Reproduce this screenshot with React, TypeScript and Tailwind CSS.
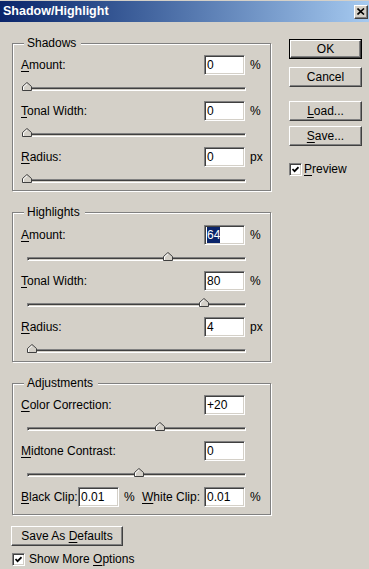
import type { ReactNode } from "react";

const sunken =
  "border border-t-[#808080] border-l-[#808080] border-b-white border-r-white shadow-[inset_1px_1px_0_#404040,inset_-1px_-1px_0_#d4d0c8]";

function U({ children }: { children: string }) {
  return <span className="underline underline-offset-[2px]">{children}</span>;
}

function Field({ value, selected }: { value: string; selected?: boolean }) {
  return (
    <div className={`flex h-[20px] w-[41px] items-center bg-white pl-[2px] leading-none ${sunken}`}>
      {selected ? <span className="bg-[#0a246a] py-[2px] text-white">{value}</span> : value}
    </div>
  );
}

function Thumb() {
  return (
    <svg width="10" height="9" viewBox="0 0 10 9">
      <polygon points="0.5,4.5 5,0.5 9.5,4.5 9.5,8.5 0.5,8.5" fill="#d4d0c8" stroke="#404040" />
      <polyline points="1.5,8 1.5,4.9 5,1.8" fill="none" stroke="#fff" />
    </svg>
  );
}

function Track({ start, thumb }: { start: string; thumb: string }) {
  return (
    <div
      className={`relative mt-[12px] mr-[24px] h-[4px] border border-t-[#808080] border-l-[#808080] border-b-white border-r-white bg-[#d4d0c8] shadow-[inset_1px_1px_0_#404040] ${start}`}
    >
      <div className={`absolute -top-[6px] flex ${thumb}`}>
        <Thumb />
      </div>
    </div>
  );
}

function SliderRow({
  label,
  value,
  unit,
  start,
  thumb,
  selected,
}: {
  label: ReactNode;
  value: string;
  unit: string;
  start: string;
  thumb: string;
  selected?: boolean;
}) {
  return (
    <div className="flex flex-col">
      <div className="flex h-[20px] items-center pl-[8px]">
        <div className="flex-1">{label}</div>
        <Field value={value} selected={selected} />
        <div className="w-[25px] pl-[5px]">{unit}</div>
      </div>
      <Track start={start} thumb={thumb} />
    </div>
  );
}

function Group({ title, className, children }: { title: string; className: string; children: ReactNode }) {
  return (
    <div
      className={`relative w-[259px] border border-[#808080] shadow-[1px_1px_0_#fff,inset_1px_1px_0_#fff] ${className}`}
    >
      <span className="absolute left-[11px] -top-[8px] bg-[#d4d0c8] pl-[3px] pr-[5px] leading-[14px]">{title}</span>
      {children}
    </div>
  );
}

function Btn({ children, def, className = "" }: { children: ReactNode; def?: boolean; className?: string }) {
  const inner = (
    <div className="flex h-full w-full items-center justify-center border border-t-white border-l-white border-r-[#404040] border-b-[#404040] shadow-[inset_-1px_-1px_0_#808080]">
      {children}
    </div>
  );
  return <div className={`${def ? "border border-black" : ""} ${className}`}>{inner}</div>;
}

function Check() {
  return (
    <div className={`flex h-[13px] w-[13px] items-center justify-center bg-white ${sunken}`}>
      <svg width="7" height="7" viewBox="0 0 7 7">
        <polyline points="0.5,3 2.6,5.2 6.5,1.2" fill="none" stroke="#000" strokeWidth="1.7" />
      </svg>
    </div>
  );
}

export default function App() {
  return (
    <div className="h-[569px] w-[369px] overflow-hidden bg-[#d4d0c8] pt-[1px] font-['Liberation_Sans',Arial,sans-serif] text-[12px] text-black">
      {/* Title bar */}
      <div className="flex h-[21px] items-center justify-between bg-linear-to-r from-[#0a246a] to-[#a6caf0] pl-[3px] pr-[1px]">
        <span className="text-[12.5px] font-bold text-white">Shadow/Highlight</span>
        <div className="flex h-[14px] w-[14px] items-center justify-center border border-t-white border-l-white border-r-[#404040] border-b-[#404040] bg-[#d4d0c8] shadow-[inset_-1px_-1px_0_#808080]">
          <svg width="8" height="7" viewBox="0 0 8 7">
            <path d="M0.5 0.5 L7 6.5 M7 0.5 L0.5 6.5" stroke="#000" strokeWidth="1.6" />
          </svg>
        </div>
      </div>

      <div className="flex">
        {/* Left column */}
        <div className="w-[271px] pl-[12px]">
          <Group title="Shadows" className="mt-[21px] flex flex-col gap-[10px] pt-[11px] pb-[7px]">
            <SliderRow label={<><U>A</U>mount:</>} value="0" unit="%" start="ml-[9px]" thumb="-left-[1px]" />
            <SliderRow label={<><U>T</U>onal Width:</>} value="0" unit="%" start="ml-[9px]" thumb="-left-[1px]" />
            <SliderRow label={<><U>R</U>adius:</>} value="0" unit="px" start="ml-[9px]" thumb="-left-[1px]" />
          </Group>

          <Group title="Highlights" className="mt-[21px] flex flex-col gap-[10px] pt-[12px] pb-[8px]">
            <SliderRow label={<><U>A</U>mount:</>} value="64" unit="%" start="ml-[14px]" thumb="left-[135px]" selected />
            <SliderRow label={<><U>T</U>onal Width:</>} value="80" unit="%" start="ml-[14px]" thumb="left-[171px]" />
            <SliderRow label={<><U>R</U>adius:</>} value="4" unit="px" start="ml-[14px]" thumb="-left-[1px]" />
          </Group>

          <Group title="Adjustments" className="mt-[21px] flex flex-col gap-[10px] pt-[11px] pb-[7px]">
            <SliderRow label={<><U>C</U>olor Correction:</>} value="+20" unit="" start="ml-[14px]" thumb="left-[127px]" />
            <SliderRow label={<><U>M</U>idtone Contrast:</>} value="0" unit="" start="ml-[14px]" thumb="left-[106px]" />
            <div className="flex h-[20px] items-center pl-[8px]">
              <div className="w-[57px]">
                <U>B</U>lack Clip:
              </div>
              <Field value="0.01" />
              <div className="w-[23px] pl-[5px]">%</div>
              <div className="w-[62px]">
                <U>W</U>hite Clip:
              </div>
              <Field value="0.01" />
              <div className="pl-[5px]">%</div>
            </div>
          </Group>

          <Btn className="-ml-[1px] mt-[11px] h-[20px] w-[112px]">
            <span>
              Save As <U>D</U>efaults
            </span>
          </Btn>

          <div className="mt-[7px] flex h-[13px] items-center gap-[4px] leading-[13px]">
            <Check />
            <span>
              Show More <U>O</U>ptions
            </span>
          </div>
        </div>

        {/* Right column */}
        <div className="ml-[18px] flex w-[73px] flex-col">
          <Btn def className="mt-[17px] h-[20px]">OK</Btn>
          <Btn className="mt-[8px] h-[20px]">Cancel</Btn>
          <Btn className="mt-[14px] h-[20px]">
            <span>
              <U>L</U>oad...
            </span>
          </Btn>
          <Btn className="mt-[5px] h-[20px]">
            <span>
              <U>S</U>ave...
            </span>
          </Btn>
          <div className="mt-[17px] flex h-[13px] items-center gap-[2px] leading-[13px]">
            <Check />
            <span>
              <U>P</U>review
            </span>
          </div>
        </div>
      </div>
    </div>
  );
}
